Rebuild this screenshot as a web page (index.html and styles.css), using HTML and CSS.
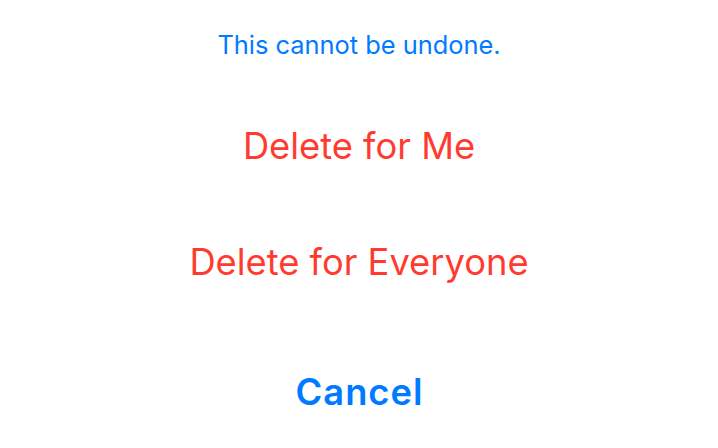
FILE: index.html
```html
<!DOCTYPE html>
<html>
<head>
<meta charset="utf-8">
<link rel="stylesheet" href="styles.css">
</head>
<body>
<div class="sheet">
  <div class="group">
    <div class="title">This cannot be undone.</div>
    <div class="action destructive">Delete for Me</div>
    <div class="action destructive">Delete for Everyone</div>
  </div>
  <div class="group cancel-group">
    <div class="action cancel">Cancel</div>
  </div>
</div>
</body>
</html>
```

FILE: styles.css
```css
html, body {
  margin: 0;
  padding: 0;
  background: #ffffff;
}
body {
  font-family: Inter, "Noto Sans", sans-serif;
  width: 718px;
  height: 448px;
  overflow: hidden;
}
.sheet {
  display: flex;
  flex-direction: column;
  gap: 14px;
}
.group {
  display: flex;
  flex-direction: column;
}
.title {
  height: 88px;
  display: flex;
  align-items: center;
  justify-content: center;
  color: #007aff;
  font-size: 25.4px;
}
.action {
  height: 116px;
  display: flex;
  align-items: center;
  justify-content: center;
  font-size: 36.3px;
}
.destructive {
  color: #ff3b30;
}
.cancel {
  color: #007aff;
  font-weight: 600;
  letter-spacing: 1px;
  text-indent: 1px;
}
```
